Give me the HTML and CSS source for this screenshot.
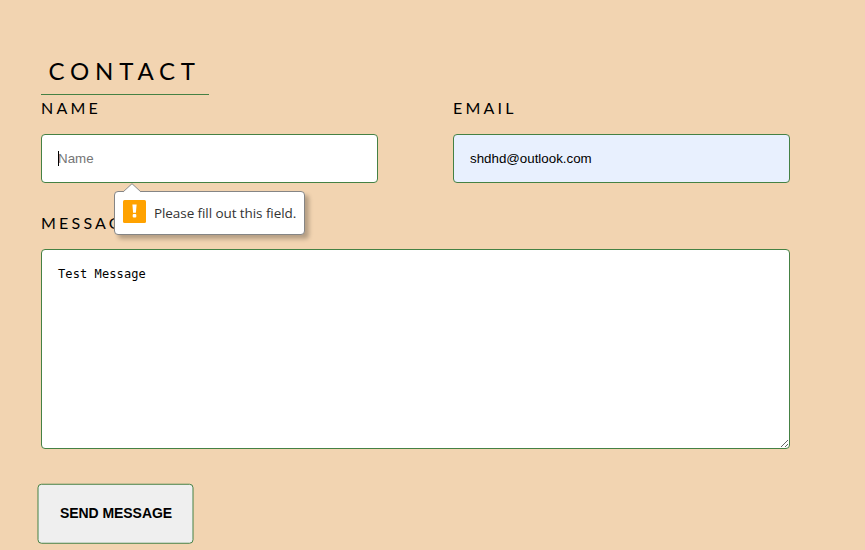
FILE: index.html
```html
<!DOCTYPE html>
<html lang="en">
<head>
<meta charset="utf-8">
<title>Contact</title>
<link rel="stylesheet" href="styles.css">
</head>
<body>
<main class="contact">
  <h2 class="title">CONTACT</h2>
  <form class="form" novalidate>
    <div class="row">
      <div class="field">
        <label class="label label-name" for="name">NAME</label>
        <div class="control">
          <input class="input" id="name" type="text" placeholder="Name">
          <span class="caret"></span>
          <div class="tooltip" role="alert">
            <svg class="arrow" width="20" height="10" viewBox="0 0 20 10"><path d="M0 10 L1 9 L10 .7 L19 9 L20 10Z" fill="#fff"/><path d="M1 9 L10 .7 L19 9" fill="none" stroke="#8b8b8b"/></svg>
            <svg class="warn" width="23" height="23" viewBox="0 0 23 23"><rect width="23" height="23" rx="1.5" fill="#ffa200"/><path d="M9.4 4.5h4.2l-.7 8.2h-2.8z" fill="#fff"/><rect x="9.7" y="14" width="3.6" height="3.6" rx="1" fill="#fff"/></svg>
            <span class="tip-text">Please fill out this field.</span>
          </div>
        </div>
      </div>
      <div class="field">
        <label class="label label-email" for="email">EMAIL</label>
        <input class="input filled" id="email" type="text" value="shdhd@outlook.com">
      </div>
    </div>
    <label class="label label-message" for="message">MESSAGE</label>
    <textarea class="input message" id="message" spellcheck="false">Test Message</textarea>
    <button class="send" type="button">SEND MESSAGE</button>
  </form>
</main>
</body>
</html>
```
FILE: styles.css
```css
* { box-sizing: border-box; }
body {
  margin: 0;
  height: 550px;
  overflow: hidden;
  background: #f2d4b1;
  color: #000;
  font-family: Lato, sans-serif;
}
.contact { width: 749px; margin-left: 41px; padding-top: 49px; }
.title {
  width: 168px;
  height: 46px;
  margin: 0;
  padding-left: 7.5px;
  border-bottom: 1px solid #458144;
  font-size: 24px;
  font-weight: 400;
  line-height: 44px;
  letter-spacing: 5.8px;
  white-space: nowrap;
}
.row { display: grid; grid-template-columns: 337px 337px; justify-content: space-between; }
.label {
  display: block;
  height: 39px;
  font-size: 16px;
  line-height: 25px;
  letter-spacing: 3.2px;
}
.control { position: relative; }
.input {
  display: block;
  width: 100%;
  height: 49px;
  margin: 0;
  padding: 0 16px;
  border: 1px solid #458144;
  border-radius: 4px;
  outline: none;
  background: #fff;
  color: #000;
  font: 13.333px "Liberation Sans", sans-serif;
}
.input::placeholder { color: #757575; }
.filled { background: #e8f0fe; }
.caret { position: absolute; left: 17px; top: 17px; width: 1px; height: 15px; background: #000; }
.label-message { margin-top: 27px; }
.message {
  height: 200px;
  padding: 16px;
  font: 12px/16px "DejaVu Sans Mono", monospace;
  letter-spacing: .1px;
  resize: both;
}
.tooltip {
  position: absolute;
  z-index: 1;
  left: 73px;
  top: 57px;
  display: flex;
  align-items: center;
  gap: 8px;
  width: 191px;
  height: 44px;
  padding: 0 8px 3px;
  border: 1px solid #858585;
  border-radius: 4px;
  background: #fff;
  box-shadow: 4px 4px 4px rgba(0, 0, 0, .25);
}
.arrow { position: absolute; left: 7px; top: -9px; }
.warn { flex: none; }
.tip-text {
  padding-top: 2px;
  color: #333;
  font: 13.5px/18px "Open Sans", sans-serif;
  letter-spacing: -.08px;
  white-space: nowrap;
}
.send {
  display: block;
  width: 156px;
  height: 59.5px;
  margin: 35px 0 0 -3px;
  padding: 0 0 1px 1px;
  border: 1px solid #458144;
  border-radius: 4px;
  background: #efefef;
  color: #000;
  font: bold 14px "Liberation Sans", sans-serif;
  letter-spacing: -.05px;
  white-space: nowrap;
  transform: translate(-.5px, -.25px);
}
```
